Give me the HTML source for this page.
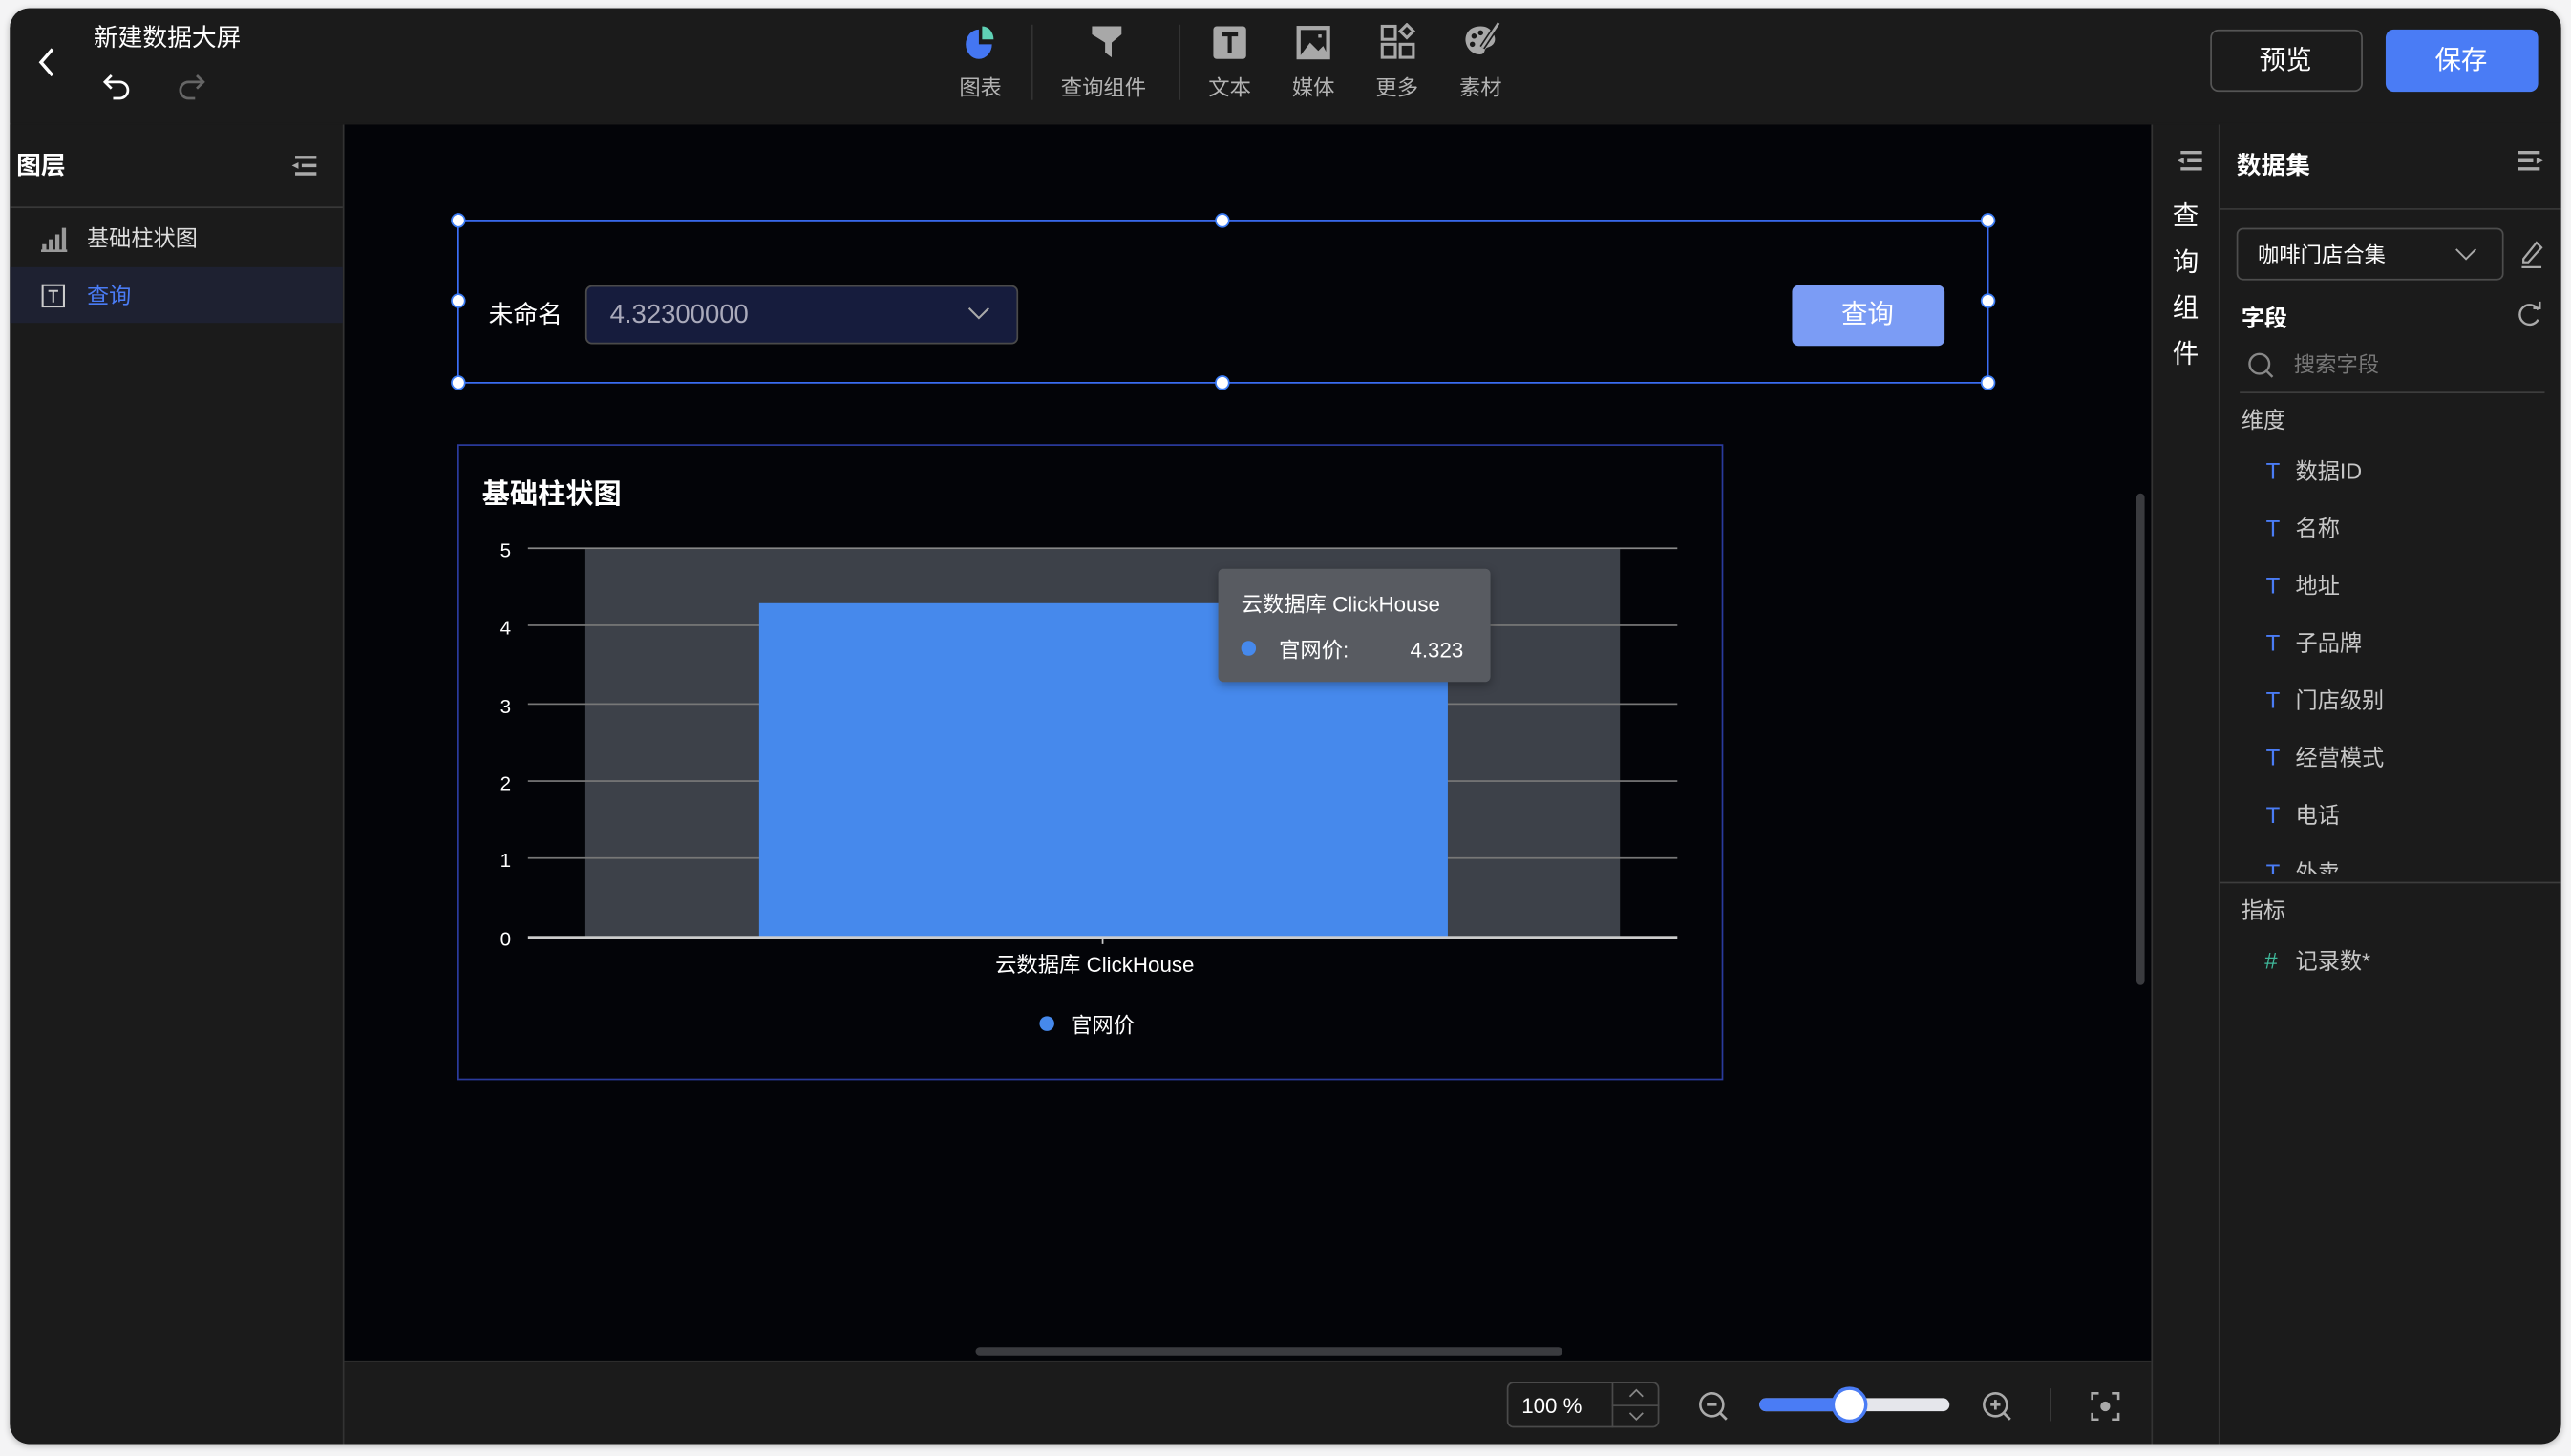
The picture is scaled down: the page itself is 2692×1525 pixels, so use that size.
<!DOCTYPE html>
<html><head><meta charset="utf-8"><style>
*{box-sizing:border-box;margin:0;padding:0}
html,body{width:2692px;height:1524px;overflow:hidden;background:#f4f4f5}
#s{position:absolute;left:0;top:0;width:1568px;height:888px;transform:scale(1.7168);transform-origin:0 0;font-family:"Liberation Sans","Noto Sans CJK SC",sans-serif;color:#fff}
.a{position:absolute}
.fr{left:6px;top:5px;width:1556px;height:876px;background:#1b1b1b;border-radius:12px;overflow:hidden;box-shadow:0 1px 4px rgba(0,0,0,.25)}
.t{position:absolute;white-space:nowrap;line-height:1}
.tb{color:#b3b3b3;font-size:13px}
.g{color:#c8c8c8}
</style></head><body><div id="s">
<div class="a fr">
 <div class="a" style="left:0;top:0;width:1556px;height:70px;background:#1b1b1b"></div>
 <svg class="a" style="left:14px;top:22px" width="16" height="22"><path d="M12 3 L5 11 L12 19" stroke="#fff" stroke-width="2" fill="none"/></svg>
 <div class="t" style="left:51px;top:11px;font-size:15px">新建数据大屏</div>
 <svg class="a" style="left:56px;top:38px" width="20" height="20"><path d="M6 3 L2 7 L6 11 M2 7 H11 A5 5 0 0 1 11 17 H7" stroke="#fff" stroke-width="1.6" fill="none"/></svg>
 <svg class="a" style="left:100px;top:38px" width="20" height="20"><path d="M14 3 L18 7 L14 11 M18 7 H9 A5 5 0 0 0 9 17 H13" stroke="#666" stroke-width="1.6" fill="none"/></svg>
 <svg class="a" style="left:582px;top:10px" width="20" height="22"><path d="M9 3 A8 9 0 1 0 17 12 H9 Z" fill="#4476f2"/><path d="M11 1 A7 8 0 0 1 18 9 H11 Z" fill="#5fd1b5"/></svg>
 <div class="t tb" style="left:579px;top:42px">图表</div>
 <div class="a" style="left:623px;top:10px;width:1px;height:46px;background:#333"></div>
 <svg class="a" style="left:658px;top:9px" width="22" height="22"><path d="M2 2 H20 V7 L14 12 V21 L10 18 V12 L2 7 Z" fill="#a8a8a8"/></svg>
 <div class="t tb" style="left:641px;top:42px">查询组件</div>
 <div class="a" style="left:713px;top:10px;width:1px;height:46px;background:#333"></div>
 <svg class="a" style="left:733px;top:10px" width="22" height="22"><rect x="1" y="1" width="20" height="20" rx="2" fill="#a8a8a8"/><path d="M6 6 H16 M11 6 V17" stroke="#1b1b1b" stroke-width="2.4"/></svg>
 <div class="t tb" style="left:731px;top:42px">文本</div>
 <svg class="a" style="left:784px;top:10px" width="22" height="22"><rect x="2" y="2" width="18" height="18" fill="none" stroke="#a8a8a8" stroke-width="2.5"/><path d="M3 19 L9 11 L14 16 L17 13 L20 19 Z" fill="#a8a8a8"/><rect x="14" y="6" width="2" height="2" fill="#a8a8a8"/></svg>
 <div class="t tb" style="left:782px;top:42px">媒体</div>
 <svg class="a" style="left:835px;top:9px" width="24" height="24"><g fill="none" stroke="#a8a8a8" stroke-width="1.8"><rect x="2" y="2" width="8" height="8"/><rect x="2" y="13" width="8" height="8"/><rect x="13" y="13" width="8" height="8"/><path d="M17 1 L21 5 L17 9 L13 5 Z"/></g></svg>
 <div class="t tb" style="left:833px;top:42px">更多</div>
 <svg class="a" style="left:886px;top:8px" width="24" height="24"><path d="M11 3 C4 3 1 8 2 13 C3 18 8 21 12 20 C14 19 13 17 15 16 C19 15 21 12 19 8 C17 4 14 3 11 3Z" fill="#a8a8a8"/><circle cx="7" cy="9" r="1.6" fill="#1b1b1b"/><circle cx="6" cy="14" r="1.6" fill="#1b1b1b"/><circle cx="11" cy="7" r="1.6" fill="#1b1b1b"/><path d="M22 1 L12 16" stroke="#1b1b1b" stroke-width="3.5"/><path d="M22 1 L12 16" stroke="#a8a8a8" stroke-width="1.6"/></svg>
 <div class="t tb" style="left:884px;top:42px">素材</div>
 <div class="a" style="left:1342px;top:13px;width:93px;height:38px;border:1px solid #555;border-radius:5px"></div>
 <div class="t" style="left:1372px;top:25px;font-size:16px">预览</div>
 <div class="a" style="left:1449px;top:13px;width:93px;height:38px;background:#4a7cf5;border-radius:5px"></div>
 <div class="t" style="left:1479px;top:25px;font-size:16px">保存</div>
 <div class="a" style="left:0;top:71px;width:204px;height:810px;background:#1b1b1b;border-right:1px solid #333"></div>
 <div class="t" style="left:4px;top:89px;font-size:15px;font-weight:bold">图层</div>
 <svg class="a" style="left:170px;top:89px" width="18" height="16"><path d="M4 2 H17 M8 7 H17 M4 12 H17" stroke="#aaa" stroke-width="2"/><path d="M6 5 L2 7 L6 9Z" fill="#aaa"/></svg>
 <div class="a" style="left:0;top:121px;width:203px;height:1px;background:#383838"></div>
 <svg class="a" style="left:19px;top:133px" width="16" height="16"><path d="M2 15 V11 M6 15 V8 M10 15 V5 M14 15 V1" stroke="#999" stroke-width="2.5"/><path d="M0 15 H16" stroke="#999" stroke-width="1.5"/></svg>
 <div class="t" style="left:47px;top:134px;font-size:13.5px;color:#ddd">基础柱状图</div>
 <div class="a" style="left:0;top:158px;width:203px;height:34px;background:#1e2131"></div>
 <svg class="a" style="left:19px;top:168px" width="16" height="16"><rect x="1" y="1" width="13" height="13" fill="none" stroke="#ccc" stroke-width="1.2"/><path d="M4.5 4.5 H10.5 M7.5 4.5 V11.5" stroke="#ccc" stroke-width="1.2"/></svg>
 <div class="t" style="left:47px;top:169px;font-size:13.5px;color:#4a7cf5">查询</div>
 <div class="a" style="left:204px;top:71px;width:1102px;height:755px;background:#030408"></div>
 <div class="a" style="left:204px;top:825px;width:1102px;height:56px;background:#1b1b1b;border-top:1px solid #353535"></div>
 <div class="a" style="left:589px;top:817px;width:358px;height:5px;background:#3a3b3f;border-radius:3px"></div>
 <div class="a" style="left:1297px;top:296px;width:5px;height:300px;background:#3a3b3f;border-radius:3px"></div>
 <div class="a" style="left:273px;top:129px;width:934px;height:100px;border:1px solid #3b6ef5"></div>
 <div class="t" style="left:292px;top:180px;font-size:15px">未命名</div>
 <div class="a" style="left:351px;top:169px;width:264px;height:36px;background:#161c3d;border:1px solid #4a4a4a;border-radius:4px"></div>
 <div class="t" style="left:366px;top:180px;font-size:16px;color:#aab">4.32300000</div>
 <svg class="a" style="left:584px;top:181px" width="14" height="10"><path d="M1 2 L7 8 L13 2" stroke="#aaa" stroke-width="1.2" fill="none"/></svg>
 <div class="a" style="left:1087px;top:169px;width:93px;height:37px;background:#7b9cf5;border-radius:4px"></div>
 <div class="t" style="left:1117px;top:180px;font-size:16px">查询</div>
 <div class="a" style="left:269px;top:125px;width:9px;height:9px;border-radius:50%;background:#fff;border:1.5px solid #3b7cf5"></div>
 <div class="a" style="left:735px;top:125px;width:9px;height:9px;border-radius:50%;background:#fff;border:1.5px solid #3b7cf5"></div>
 <div class="a" style="left:1202px;top:125px;width:9px;height:9px;border-radius:50%;background:#fff;border:1.5px solid #3b7cf5"></div>
 <div class="a" style="left:269px;top:174px;width:9px;height:9px;border-radius:50%;background:#fff;border:1.5px solid #3b7cf5"></div>
 <div class="a" style="left:1202px;top:174px;width:9px;height:9px;border-radius:50%;background:#fff;border:1.5px solid #3b7cf5"></div>
 <div class="a" style="left:269px;top:224px;width:9px;height:9px;border-radius:50%;background:#fff;border:1.5px solid #3b7cf5"></div>
 <div class="a" style="left:735px;top:224px;width:9px;height:9px;border-radius:50%;background:#fff;border:1.5px solid #3b7cf5"></div>
 <div class="a" style="left:1202px;top:224px;width:9px;height:9px;border-radius:50%;background:#fff;border:1.5px solid #3b7cf5"></div>
 <div class="a" style="left:273px;top:266px;width:772px;height:388px;border:1px solid #2a3a9c"></div>
 <div class="t" style="left:288px;top:288px;font-size:17px;font-weight:bold">基础柱状图</div>
 <div class="a" style="left:351px;top:330px;width:631px;height:237px;background:#3d4149"></div>
 <div class="a" style="left:316px;top:329px;width:701px;height:1px;background:#888"></div>
 <div class="a" style="left:316px;top:376px;width:701px;height:1px;background:#777"></div>
 <div class="a" style="left:316px;top:424px;width:701px;height:1px;background:#777"></div>
 <div class="a" style="left:316px;top:471px;width:701px;height:1px;background:#777"></div>
 <div class="a" style="left:316px;top:518px;width:701px;height:1px;background:#777"></div>
 <div class="a" style="left:457px;top:363px;width:420px;height:204px;background:#4689ec"></div>
 <div class="a" style="left:316px;top:566px;width:701px;height:1.5px;background:#ccc"></div>
 <div class="a" style="left:666px;top:567px;width:1px;height:4px;background:#ccc"></div>
 <div class="t" style="left:299px;top:325px;font-size:12px">5</div>
 <div class="t" style="left:299px;top:372px;font-size:12px">4</div>
 <div class="t" style="left:299px;top:420px;font-size:12px">3</div>
 <div class="t" style="left:299px;top:467px;font-size:12px">2</div>
 <div class="t" style="left:299px;top:514px;font-size:12px">1</div>
 <div class="t" style="left:299px;top:562px;font-size:12px">0</div>
 <div class="a" style="left:737px;top:342px;width:166px;height:69px;background:#585b61;border-radius:3px;box-shadow:0 2px 6px rgba(0,0,0,.3)"></div>
 <div class="t" style="left:751px;top:357px;font-size:13px">云数据库 ClickHouse</div>
 <div class="a" style="left:751px;top:386px;width:9px;height:9px;border-radius:50%;background:#4689ec"></div>
 <div class="t" style="left:774px;top:385px;font-size:13px">官网价:</div>
 <div class="t" style="left:854px;top:385px;font-size:13px">4.323</div>
 <div class="t" style="left:601px;top:577px;font-size:13px">云数据库 ClickHouse</div>
 <div class="a" style="left:628px;top:615px;width:9px;height:9px;border-radius:50%;background:#4689ec"></div>
 <div class="t" style="left:647px;top:614px;font-size:13px">官网价</div>
 <div class="a" style="left:913px;top:838px;width:93px;height:28px;border:1px solid #4a4a4a;border-radius:4px"></div>
 <div class="a" style="left:977px;top:838px;width:1px;height:28px;background:#4a4a4a"></div>
 <div class="a" style="left:977px;top:852px;width:29px;height:1px;background:#4a4a4a"></div>
 <div class="t" style="left:922px;top:846px;font-size:13px">100 %</div>
 <svg class="a" style="left:985px;top:840px" width="14" height="24"><path d="M3 7 L7 3 L11 7 M3 17 L7 21 L11 17" stroke="#888" stroke-width="1" fill="none"/></svg>
 <svg class="a" style="left:1029px;top:843px" width="20" height="20"><circle cx="9" cy="9" r="7" stroke="#aaa" stroke-width="1.5" fill="none"/><path d="M6 9 H12 M14 14 L18 18" stroke="#aaa" stroke-width="1.6"/></svg>
 <div class="a" style="left:1067px;top:848px;width:116px;height:8px;border-radius:4px;background:#e5e6eb"></div>
 <div class="a" style="left:1067px;top:848px;width:58px;height:8px;border-radius:4px;background:#4a7cf5"></div>
 <div class="a" style="left:1111px;top:841px;width:22px;height:22px;border-radius:50%;background:#fff;border:2.5px solid #4a7cf5"></div>
 <svg class="a" style="left:1202px;top:843px" width="20" height="20"><circle cx="9" cy="9" r="7" stroke="#aaa" stroke-width="1.5" fill="none"/><path d="M6 9 H12 M9 6 V12 M14 14 L18 18" stroke="#aaa" stroke-width="1.6"/></svg>
 <div class="a" style="left:1244px;top:842px;width:1px;height:20px;background:#444"></div>
 <svg class="a" style="left:1269px;top:844px" width="18" height="18"><path d="M1 5 V1 H5 M13 1 H17 V5 M17 13 V17 H13 M5 17 H1 V13" stroke="#aaa" stroke-width="1.5" fill="none"/><circle cx="9" cy="9" r="3" fill="#aaa"/></svg>
 <div class="a" style="left:1306px;top:71px;width:42px;height:810px;background:#1b1b1b;border-left:1px solid #333;border-right:1px solid #333"></div>
 <svg class="a" style="left:1320px;top:86px" width="18" height="16"><path d="M4 2 H17 M8 7 H17 M4 12 H17" stroke="#aaa" stroke-width="2"/><path d="M6 5 L2 7 L6 9Z" fill="#aaa"/></svg>
 <div class="t" style="left:1319px;top:114px;font-size:16px;line-height:28px;width:16px;white-space:normal">查询组件</div>
 <div class="t" style="left:1358px;top:89px;font-size:15px;font-weight:bold">数据集</div>
 <svg class="a" style="left:1529px;top:86px" width="18" height="16"><path d="M1 2 H14 M1 7 H10 M1 12 H14" stroke="#aaa" stroke-width="2"/><path d="M12 5 L16 7 L12 9Z" fill="#aaa"/></svg>
 <div class="a" style="left:1348px;top:122px;width:208px;height:1px;background:#383838"></div>
 <div class="a" style="left:1358px;top:134px;width:163px;height:32px;border:1px solid #4d4d4d;border-radius:4px"></div>
 <div class="t" style="left:1371px;top:144px;font-size:13px">咖啡门店合集</div>
 <svg class="a" style="left:1491px;top:145px" width="14" height="10"><path d="M1 2 L7 8 L13 2" stroke="#aaa" stroke-width="1.1" fill="none"/></svg>
 <svg class="a" style="left:1530px;top:141px" width="16" height="18"><path d="M3 12 L11 2 L14 5 L6 14 L3 14Z" stroke="#aaa" stroke-width="1.3" fill="none"/><path d="M2 17 H14" stroke="#aaa" stroke-width="1.3"/></svg>
 <div class="t" style="left:1361px;top:182px;font-size:14px;font-weight:bold">字段</div>
 <svg class="a" style="left:1529px;top:178px" width="16" height="18"><path d="M13 6 A6 6 0 1 0 13 12" stroke="#aaa" stroke-width="1.4" fill="none"/><path d="M10 5 L14 5 L14 1" stroke="#aaa" stroke-width="1.4" fill="none"/></svg>
 <svg class="a" style="left:1364px;top:209px" width="18" height="18"><circle cx="8" cy="8" r="6" stroke="#888" stroke-width="1.4" fill="none"/><path d="M12.5 12.5 L16 16" stroke="#888" stroke-width="1.4"/></svg>
 <div class="t" style="left:1393px;top:211px;font-size:13px;color:#777">搜索字段</div>
 <div class="a" style="left:1360px;top:234px;width:186px;height:1px;background:#3d3d3d"></div>
 <div class="t g" style="left:1361px;top:245px;font-size:13.5px">维度</div>
 <div class="a" style="left:1348px;top:71px;width:208px;height:457px;overflow:hidden">
  <div class="t" style="left:28px;top:204px;font-size:14px;color:#4a7cf5">T</div><div class="t g" style="left:46px;top:205px;font-size:13.5px">数据ID</div>
  <div class="t" style="left:28px;top:239px;font-size:14px;color:#4a7cf5">T</div><div class="t g" style="left:46px;top:240px;font-size:13.5px">名称</div>
  <div class="t" style="left:28px;top:274px;font-size:14px;color:#4a7cf5">T</div><div class="t g" style="left:46px;top:275px;font-size:13.5px">地址</div>
  <div class="t" style="left:28px;top:309px;font-size:14px;color:#4a7cf5">T</div><div class="t g" style="left:46px;top:310px;font-size:13.5px">子品牌</div>
  <div class="t" style="left:28px;top:344px;font-size:14px;color:#4a7cf5">T</div><div class="t g" style="left:46px;top:345px;font-size:13.5px">门店级别</div>
  <div class="t" style="left:28px;top:379px;font-size:14px;color:#4a7cf5">T</div><div class="t g" style="left:46px;top:380px;font-size:13.5px">经营模式</div>
  <div class="t" style="left:28px;top:414px;font-size:14px;color:#4a7cf5">T</div><div class="t g" style="left:46px;top:415px;font-size:13.5px">电话</div>
  <div class="t" style="left:28px;top:449px;font-size:14px;color:#4a7cf5">T</div><div class="t g" style="left:46px;top:450px;font-size:13.5px">外卖</div>
 </div>
 <div class="a" style="left:1348px;top:533px;width:208px;height:1px;background:#3d3d3d"></div>
 <div class="t g" style="left:1361px;top:544px;font-size:13.5px">指标</div>
 <div class="t" style="left:1375px;top:574px;font-size:14px;color:#3fb89a;font-style:italic">#</div>
 <div class="t g" style="left:1394px;top:575px;font-size:13.5px">记录数*</div>
</div>
</div></body></html>
